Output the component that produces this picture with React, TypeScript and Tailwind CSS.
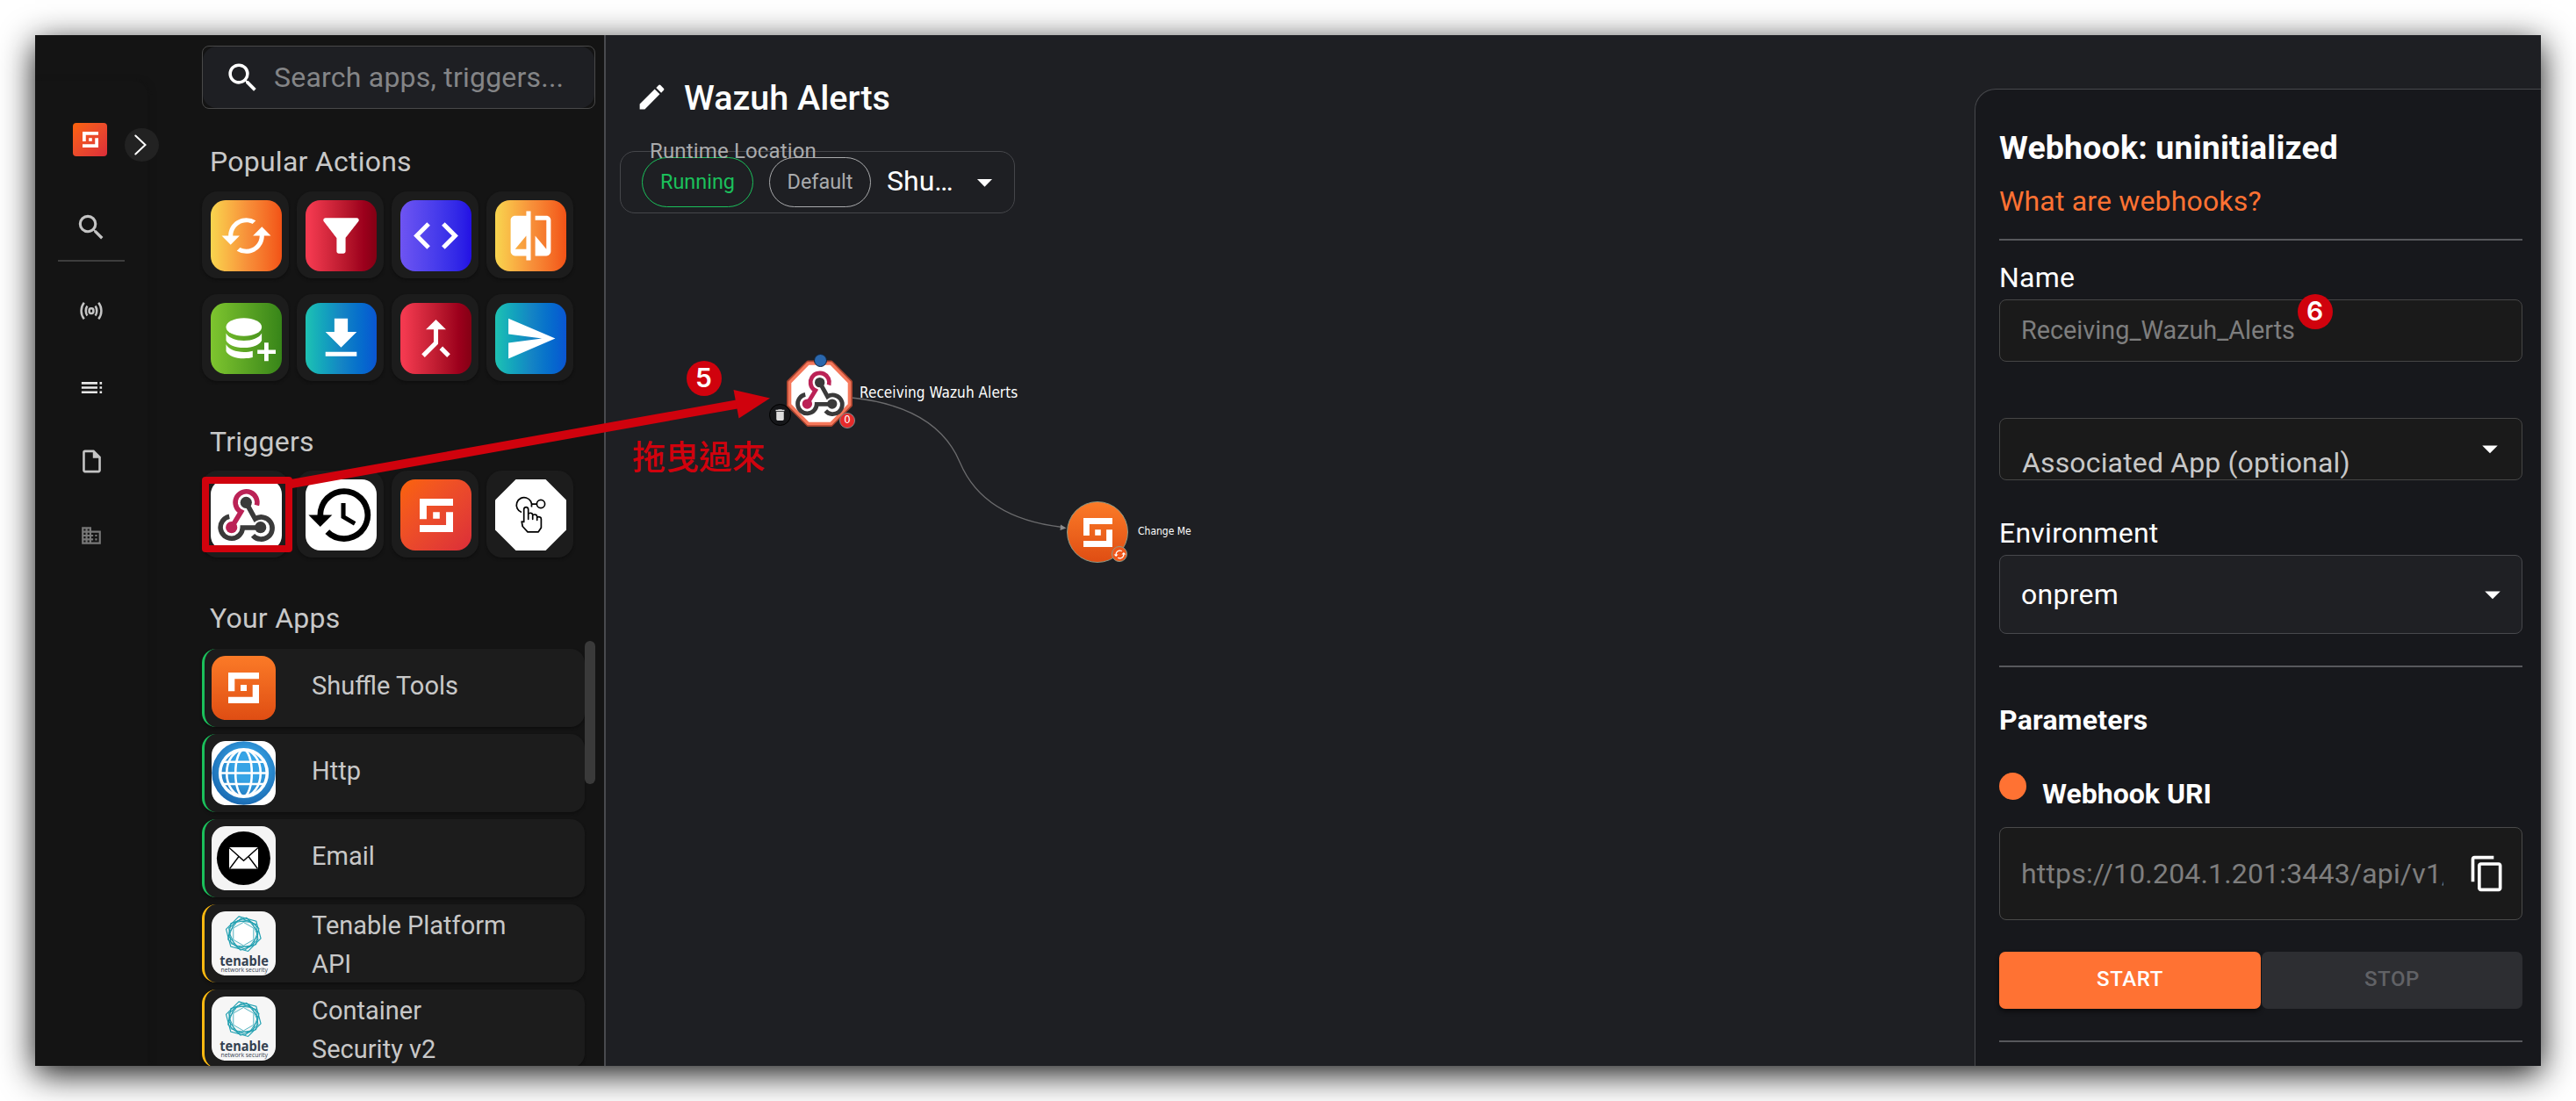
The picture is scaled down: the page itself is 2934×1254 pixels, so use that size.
import type { ReactNode } from "react";
import {
  MdArrowDropDown,
  MdBusiness,
  MdCached,
  MdCallMerge,
  MdCode,
  MdCompare,
  MdContentCopy,
  MdDelete,
  MdEdit,
  MdFilterAlt,
  MdGetApp,
  MdHistory,
  MdOutlineInsertDriveFile,
  MdSearch,
  MdSend,
  MdToc,
} from "react-icons/md";

function ShuffleMark({ className }: { className: string }) {
  return (
    <svg viewBox="0 0 115 115" className={className} fill="#fff">
      <path d="M0 0h115v24H24v46H0z" />
      <path d="M46 46h23v23H46z" />
      <path d="M115 115H0V91h91V46h24z" />
    </svg>
  );
}

function WebhookMark({ className }: { className: string }) {
  return (
    <svg viewBox="0 0 81 81" className={className} fill="none" strokeWidth="5.6">
      <path d="M21.2 42.3A12.6 12.6 0 1 0 36.3 55H56.7" stroke="#3a3a3a" />
      <path d="M40.3 26.3L50.6 45A12.6 12.6 0 1 1 48 63.8" stroke="#3a3a3a" />
      <path d="M52.4 29.6A12.4 12.4 0 1 0 32.4 35.6L34.6 36.8L23.7 54.7" stroke="#bb2256" />
      <circle cx="40.3" cy="26.3" r="6.6" fill="#3a3a3a" />
      <circle cx="56.7" cy="54.7" r="6.6" fill="#3a3a3a" />
      <circle cx="23.7" cy="54.7" r="6.6" fill="#bb2256" />
    </svg>
  );
}

function BroadcastIcon() {
  return (
    <svg viewBox="0 0 26 20" className="h-5 w-[26px]" fill="none" stroke="#c4c4c4" strokeWidth="2.5">
      <rect x="10.6" y="7.2" width="4.8" height="5.8" rx="2.2" />
      <path d="M8.4 4.4C6.200 7.4 6.200 12.600 8.400 15.600M17.600 4.400c2.200 3 2.200 8.200 0 11.200" />
      <path d="M4.800 .8C.500 6 .500 14.200 4.800 19.300M21.200 .8c4.300 5.200 4.300 13.400 0 18.500" />
    </svg>
  );
}

function DatabasePlusIcon() {
  return (
    <svg viewBox="0 0 81 81" className="size-[81px]" fill="#fff">
      <ellipse cx="37.800" cy="27.500" rx="20.300" ry="10.200" />
      <path d="M17.500 34.500c3 5.500 11 8.500 20.300 8.500s17.300-3 20.300-8.500v8.200c-2 4.800-10 8.300-20.300 8.300s-18.300-3.500-20.300-8.300z" />
      <path d="M17.500 47.300c3 5.500 11 8.700 20.300 8.700 3.600 0 7-.4 10-1.200v7.300c-3 .8-6.400 1.200-10 1.200-10.300 0-18.300-3.500-20.300-8.300z" />
      <path d="M61 45.300h4.800v8.200H74v4.600h-8.200v8.200H61v-8.200h-7.800v-4.600H61z" />
    </svg>
  );
}

function ManualTriggerIcon() {
  return (
    <svg viewBox="0 0 81 81" className="size-[81px]" fill="none">
      <path d="M23.500 0h34L81 23.500v34L57.500 81h-34L0 57.500v-34z" fill="#fff" />
      <g stroke="#000" strokeWidth="1.700" strokeLinejoin="round">
        <path d="M30 37.500A8.700 8.700 0 1 1 41.400 31.500" />
        <path d="M41.600 28.200h5.800" />
        <circle cx="52" cy="28" r="4.600" />
        <path d="M32.700 48.500V34.300c0-3.600 5-3.600 5 0v11V39.500c1.500-2 5-1.500 5 1v4.800V41c1.500-1.800 5-1 5 1.300v4V43.500c1.800-1.600 4.700-.6 4.700 1.500v10l-3.200 4.800H37l-5.800-6.300-1-5.500z" />
      </g>
    </svg>
  );
}

function GlobeIcon() {
  return (
    <svg viewBox="0 0 73 73" className="size-[73px]" fill="none">
      <defs>
        <radialGradient id="globe" cx="0.55" cy="0.4" r="0.6">
          <stop offset="0.35" stopColor="#36a4e6" />
          <stop offset="1" stopColor="#1b6bb3" />
        </radialGradient>
      </defs>
      <path d="M0 0h73v73H0z" fill="#fff" />
      <circle cx="36.500" cy="36.500" r="36.200" fill="url(#globe)" />
      <g stroke="#fff" strokeWidth="2.600">
        <circle cx="36.500" cy="36.500" r="26.800" strokeWidth="3.600" />
        <ellipse cx="36.500" cy="36.500" rx="9.300" ry="26.500" />
        <ellipse cx="36.500" cy="36.500" rx="19.300" ry="26.500" />
        <path d="M10 36.500h53M13.500 23.800h46M13.500 49h46" />
      </g>
    </svg>
  );
}

function EnvelopeIcon() {
  return (
    <svg viewBox="0 0 73 73" className="size-[73px]">
      <path d="M0 0h73v73H0z" fill="#f4f4f4" />
      <circle cx="36.400" cy="36.500" r="30.500" fill="#000" />
      <path d="M20 24h33v24.500H20z" fill="#fff" />
      <path d="M20 24.500l16.500 14.800L53 24.500M20.500 48.500l10.500-14M52.500 48.500l-10.500-14" fill="none" stroke="#000" strokeWidth="1.400" />
    </svg>
  );
}

function TenableIcon() {
  return (
    <svg viewBox="0 0 73 73" className="size-[73px]">
      <path d="M0 0h73v73H0z" fill="#f6f6f6" />
      <g transform="translate(36.300 25.700)" fill="none" stroke="#1f9fb0" strokeWidth="1.100">
        <path transform="rotate(-15) scale(1.050)" d="M0-19.500l16.900 9.800v19.400L0 19.500l-16.900-9.800V-9.700z" />
        <path transform="rotate(-8) scale(.92)" d="M0-19.500l16.900 9.800v19.400L0 19.500l-16.900-9.800V-9.700z" />
        <path transform="rotate(10) scale(.96)" d="M0-19.500l16.900 9.800v19.400L0 19.500l-16.900-9.800V-9.700z" />
        <path transform="rotate(20) scale(.86)" d="M0-19.500l16.900 9.800v19.400L0 19.500l-16.900-9.800V-9.700z" />
        <path transform="rotate(-24) scale(.84)" d="M0-19.500l16.900 9.800v19.400L0 19.500l-16.900-9.800V-9.700z" />
        <path transform="scale(.68)" d="M0-19.500l16.900 9.800v19.400L0 19.500l-16.900-9.800V-9.700z" fill="#fff" />
      </g>
      <text x="9.300" y="61.500" textLength="55.500" lengthAdjust="spacingAndGlyphs" className="font-['Open_Sans'] text-[16px] font-bold" fill="#344150">
        tenable
      </text>
      <text x="10.500" y="69" textLength="53.500" lengthAdjust="spacingAndGlyphs" className="font-['Open_Sans'] text-[7px]" fill="#344150">
        network security
      </text>
    </svg>
  );
}

function Tile({ fill, children }: { fill: string; children: ReactNode }) {
  return (
    <div className="h-[99px] w-[99px] rounded-[18px] bg-[#1c1c1c] pt-2.5 pl-2.5 shadow-[0_2px_3px_#0f0f0f]">
      <div className={`flex size-[81px] items-center justify-center overflow-hidden rounded-[17px] text-white ${fill}`}>
        {children}
      </div>
    </div>
  );
}

const amber = "bg-linear-to-r from-[#f8d54f] via-[#f7913a] to-[#f25216]";
const crimson = "bg-linear-to-r from-[#f3394f] from-5% via-[#9c001c] via-82% to-[#840014]";
const violet = "bg-linear-to-r from-[#6e54f2] to-[#230fe4]";
const green = "bg-linear-to-r from-[#7ec52f] to-[#378519]";
const ocean = "bg-linear-to-r from-[#1fc2b2] via-[#1585c4] to-[#0b55d2]";
const flame = "bg-linear-to-br from-[#fb6306] to-[#db2d38]";

const actions = [
  { name: "repeat", fill: amber, icon: <MdCached className="size-[61px]" /> },
  { name: "filter", fill: crimson, icon: <MdFilterAlt className="size-[61px]" /> },
  { name: "code", fill: violet, icon: <MdCode className="size-[61px]" /> },
  { name: "compare", fill: amber, icon: <MdCompare className="size-[61px]" /> },
  { name: "store", fill: green, icon: <DatabasePlusIcon /> },
  { name: "download", fill: ocean, icon: <MdGetApp className="size-[61px]" /> },
  { name: "merge", fill: crimson, icon: <MdCallMerge className="size-[61px]" /> },
  { name: "send", fill: ocean, icon: <MdSend className="size-[61px]" /> },
];

const triggers = [
  { name: "webhook", fill: "bg-white", icon: <WebhookMark className="size-[81px]" /> },
  { name: "schedule", fill: "bg-white", icon: <MdHistory className="size-[81px] text-black" /> },
  { name: "subflow", fill: flame, icon: <ShuffleMark className="size-[38px]" /> },
  { name: "manual", fill: "bg-transparent", icon: <ManualTriggerIcon /> },
];

const apps = [
  {
    name: "Shuffle Tools",
    edge: "border-[#1bc05b]",
    pad: "pt-5",
    icon: (
      <div className="flex size-full items-center justify-center bg-linear-to-b from-[#fb7a27] to-[#df4d13]">
        <ShuffleMark className="size-[35px]" />
      </div>
    ),
  },
  { name: "Http", edge: "border-[#1bc05b]", pad: "pt-5", icon: <GlobeIcon /> },
  { name: "Email", edge: "border-[#1bc05b]", pad: "pt-5", icon: <EnvelopeIcon /> },
  { name: "Tenable Platform API", edge: "border-[#fbb911]", pad: "pt-0.5", icon: <TenableIcon /> },
  { name: "Container Security v2", edge: "border-[#fbb911]", pad: "pt-0.5", icon: <TenableIcon /> },
];

function NavRail() {
  return (
    <nav className="w-[150px] shrink-0 pt-[52px]">
      <div className="relative flex h-full w-32 flex-col items-center rounded-tr-[16px] pt-12 text-[#c4c4c4] shadow-[3px_0_6px_#131313]">
        <div className="mr-[3px] flex h-[38px] w-[39px] shrink-0 items-center justify-center rounded-[4px] bg-linear-to-br from-[#fb6306] to-[#db2d38]">
          <ShuffleMark className="size-[18px]" />
        </div>
        <div className="absolute top-[54px] left-[102px] flex h-[38px] w-[39px] items-center justify-center rounded-full bg-[#222]">
          <svg viewBox="0 0 39 38" className="h-[38px] w-[39px]" fill="none" stroke="#fff" strokeWidth="2">
            <path d="M12.300 8.500L23.500 19L12.300 29.500" strokeLinecap="round" />
          </svg>
        </div>
        <div className="mt-[61px] flex size-10 shrink-0 items-center justify-center">
          <MdSearch className="size-[38px]" />
        </div>
        <div className="mt-[17px] h-0.5 w-[76px] shrink-0 bg-[#3d3d3d]" />
        <div className="mt-9 flex size-10 shrink-0 items-center justify-center">
          <BroadcastIcon />
        </div>
        <div className="mt-[47px] flex size-10 shrink-0 items-center justify-center">
          <MdToc className="size-[31px] text-[#e8e8e8]" />
        </div>
        <div className="mt-11 flex size-10 shrink-0 items-center justify-center">
          <MdOutlineInsertDriveFile className="size-[31px]" />
        </div>
        <div className="mt-[45px] flex size-10 shrink-0 items-center justify-center">
          <MdBusiness className="size-[26px] text-[#777]" />
        </div>
      </div>
    </nav>
  );
}

function Sidebar() {
  const heading = "pl-[9px] text-[32px] leading-[48px] tracking-[0.25px] text-[#c8c8c8]";
  return (
    <aside className="w-[500px] shrink-0 overflow-hidden border-r-2 border-[#494a4e] pt-3 pl-10">
      <div className="h-[72px] w-[448px] rounded-[8px] border border-[#494949]">
        <div className="flex h-full items-center gap-[14px] rounded-[16px] bg-[#1e1f23] pl-6">
          <MdSearch className="size-[43px] text-white" />
          <span className="text-[32px] tracking-[0.22px] whitespace-nowrap text-[#848587]">Search apps, triggers...</span>
        </div>
      </div>
      <h2 className={`mt-9 ${heading}`}>Popular Actions</h2>
      <div className="mt-2.5 grid w-[423px] grid-cols-4 gap-x-[9px] gap-y-[18px]">
        {actions.map((a) => (
          <Tile key={a.name} fill={a.fill}>
            {a.icon}
          </Tile>
        ))}
      </div>
      <h2 className={`mt-[45px] ${heading}`}>Triggers</h2>
      <div className="mt-[9px] grid w-[423px] grid-cols-4 gap-x-[9px]">
        {triggers.map((t) => (
          <Tile key={t.name} fill={t.fill}>
            {t.icon}
          </Tile>
        ))}
      </div>
      <h2 className={`mt-[45px] ${heading}`}>Your Apps</h2>
      <div className="mt-0.5 flex">
        <ul className="flex w-[436px] flex-col gap-2 pt-[9px]">
          {apps.map((app) => (
            <li key={app.name} className={`flex h-[89px] rounded-[16px] border-l-3 bg-[#1c1c1c] pl-2 shadow-[0_2px_3px_#0f0f0f] ${app.edge}`}>
              <div className="mt-2 size-[73px] shrink-0 overflow-hidden rounded-[16px]">{app.icon}</div>
              <p className={`ml-[41px] w-[228px] text-[29px] leading-[44px] text-[#c8c8c8] ${app.pad}`}>{app.name}</p>
            </li>
          ))}
        </ul>
        <div className="h-[163px] w-3 rounded-full bg-[#3a3a3a]" />
      </div>
    </aside>
  );
}

function Canvas() {
  return (
    <main className="relative min-w-0 flex-1 pt-12">
      <div className="flex h-12 items-center gap-[18px] pl-[34px] text-white">
        <MdEdit className="mb-[3px] size-[37px]" />
        <h1 className="text-[39.500px] font-medium">Wazuh Alerts</h1>
      </div>
      <div className="relative mt-9 ml-4 flex h-[71px] w-[450px] items-center rounded-[17px] border border-[#45464a] pr-[13px] pl-6">
        <span className="absolute -top-[17px] left-[33px] text-[24px] leading-8 tracking-[0.15px] text-[#aaabad]">Runtime Location</span>
        <span className="flex h-[57px] w-[127px] items-center justify-center rounded-full border border-[#1bc05b] text-[23.400px] text-[#1bc05b]">
          Running
        </span>
        <span className="ml-[18px] flex h-[57px] w-[116px] items-center justify-center rounded-full border border-[#a9aaac] text-[23.400px] text-[#aaabad]">
          Default
        </span>
        <span className="ml-[18px] pb-1 text-[32px] text-white">Shu…</span>
        <MdArrowDropDown className="ml-auto size-[41px] text-white" />
      </div>

      <svg viewBox="690 40 1559 1174" className="absolute top-0 left-0 h-[1174px] w-[1559px]" fill="none">
        <path d="M970 453Q1067 463 1093.500 527Q1120 590 1210 600.500" stroke="#6b6b6d" strokeWidth="1.300" />
        <path d="M1208 597.500l6.500 4-7 2.600z" fill="#8a8a8c" />
        <g strokeLinejoin="round">
          <path d="M920.500 413h26L968.500 435v26.500L946.500 483.500h-26L898.500 461.500V435z" stroke="#a8432f" strokeWidth="5" />
          <path d="M920.500 414h26L967.500 435.500v25.500L946.500 482.500h-26L899.500 461V435.500z" stroke="#f5785b" strokeWidth="3.600" fill="#fff" />
        </g>
      </svg>

      <WebhookMark className="absolute top-[373.300px] left-[208.900px] size-[69.700px]" />
      <div className="absolute top-[363px] left-[236.500px] size-[15px] rounded-full border border-[#12233a] bg-[#2a67ad]" />
      <div className="absolute top-[419.500px] left-[186px] flex size-[25px] items-center justify-center rounded-full border border-black bg-[#151619]">
        <MdDelete className="size-[17px] text-[#dcdcdc]" />
      </div>
      <div className="absolute top-[430px] left-[266px] flex size-[18px] items-center justify-center rounded-full border border-[#7d8a8c] bg-[#e52a2a] pb-0.5 font-['DejaVu_Sans_Condensed'] text-[13px] text-white">
        0
      </div>
      <span className="absolute top-[396px] left-[289px] font-['DejaVu_Sans_Condensed'] text-[17px] leading-[22px] tracking-[0.06px] whitespace-nowrap text-white">
        Receiving Wazuh Alerts
      </span>

      <div className="absolute top-[531px] left-[525px] flex size-[70px] items-center justify-center rounded-full border border-[#8d9a86] bg-linear-to-b from-[#fb7a27] to-[#df4d13]">
        <ShuffleMark className="size-[33px]" />
      </div>
      <div className="absolute top-[582px] left-[576px] flex size-[18px] items-center justify-center rounded-full border border-[#8d9a86] bg-[#f2571a]">
        <MdCached className="size-[15px] text-white" />
      </div>
      <span className="absolute top-[557px] left-[606px] font-['DejaVu_Sans_Condensed'] text-[12px] leading-4 whitespace-nowrap text-white">Change Me</span>
    </main>
  );
}

function DetailsPanel() {
  const label = "text-[32px] leading-[48px] tracking-[0.25px]";
  return (
    <aside className="mt-[61px] w-[645px] shrink-0 overflow-hidden rounded-tl-[24px] border-t border-l border-[#47484c] bg-[#17181c] pt-[42px] pr-[21px] pl-[27px] text-white">
      <h2 className="text-[37.500px] leading-[48px] font-bold tracking-[0.17px]">Webhook: uninitialized</h2>
      <p className="mt-[13px] text-[32px] leading-[48px] tracking-[0.17px] text-[#ff7233]">What are webhooks?</p>
      <div className="mt-[19px] h-0.5 bg-[#57585c]" />
      <p className={`mt-[18px] ${label}`}>Name</p>
      <div className="mt-px flex h-[71px] items-center rounded-[8px] border border-[#464646] bg-[#1a1a1a] pl-6 text-[28.800px] text-[#7e7e7e]">
        Receiving_Wazuh_Alerts
      </div>
      <div className="mt-16 flex h-[71px] items-start justify-between rounded-[8px] border border-[#464646] bg-[#1a1a1a] pr-[15px] pl-[25px]">
        <span className="mt-[26px] text-[32px] leading-[48px] tracking-[0.15px] text-[#c8c8c8]">Associated App (optional)</span>
        <MdArrowDropDown className="mt-[13px] size-[42px]" />
      </div>
      <p className={`mt-9 ${label}`}>Environment</p>
      <div className="mt-px flex h-[90px] items-center justify-between rounded-[8px] border border-[#47484c] bg-[#1f2024] pr-[12.500px] pl-6">
        <span className={label}>onprem</span>
        <MdArrowDropDown className="size-[42px]" />
      </div>
      <div className="mt-9 h-0.5 bg-[#57585c]" />
      <h3 className="mt-9 text-[32px] leading-[48px] font-bold tracking-[0.22px]">Parameters</h3>
      <div className="mt-9 flex items-start gap-[18px]">
        <div className="size-[31px] rounded-full bg-[#ff7233]" />
        <h3 className="text-[32px] leading-[48px] font-bold">Webhook URI</h3>
      </div>
      <div className="mt-[14px] flex h-[106px] items-center justify-between rounded-[8px] border border-[#4a4a4a] bg-[#1a1a1a] pr-[17px] pl-6">
        <span className="w-[481px] overflow-hidden text-[32px] leading-[48px] tracking-[0.170px] whitespace-nowrap text-[#7e7e7e]">
          https://10.204.1.201:3443/api/v1/
        </span>
        <MdContentCopy className="size-[44px]" />
      </div>
      <div className="mt-9 flex gap-px text-[24px] font-medium tracking-[0.600px]">
        <button className="h-[65px] w-[298px] rounded-[7px] bg-[#ff7233] pb-[3px] text-white shadow-[0_3px_5px_#0c0c0e]">START</button>
        <button className="h-[65px] w-[297px] rounded-[7px] bg-[#2d2e32] pb-[3px] text-[#616266]">STOP</button>
      </div>
      <div className="mt-9 h-0.5 bg-[#57585c]" />
    </aside>
  );
}

function StepBadge({ step, place }: { step: string; place: string }) {
  return (
    <div className={`absolute flex size-10 items-center justify-center rounded-full bg-[#d0020d] pb-px font-['Inter'] text-[30px] font-semibold text-white ${place}`}>
      {step}
    </div>
  );
}

export default function App() {
  return (
    <div className="relative h-[1254px] w-[2934px] overflow-hidden bg-white p-10 font-['Roboto',sans-serif]">
      <div className="flex h-[1174px] w-[2854px] shadow-[0_9px_36px_rgba(0,0,0,0.93)]">
        <div className="flex h-full w-full overflow-hidden bg-[#1e1f23]">
          <div className="flex bg-[#141414]">
            <NavRail />
            <Sidebar />
          </div>
          <Canvas />
          <DetailsPanel />
        </div>
      </div>

      <svg viewBox="0 0 2934 1254" className="absolute inset-0 h-[1254px] w-[2934px]" fill="none">
        <path d="M332 551L842 460" stroke="#d0020d" strokeWidth="10" />
        <path d="M877 453.500L835.500 444L841.500 476.500z" fill="#d0020d" />
        <rect x="234" y="547" width="95" height="78" stroke="#d0020d" strokeWidth="8" strokeLinejoin="round" />
      </svg>
      <StepBadge step="5" place="top-[411px] left-[781.500px]" />
      <StepBadge step="6" place="top-[335px] left-[2616.500px]" />
      <span className="absolute top-[492px] left-[720px] font-['Noto_Sans_CJK_TC',sans-serif] text-[37.900px] leading-[52px] font-medium whitespace-nowrap text-[#d0020d]">
        拖曳過來
      </span>
    </div>
  );
}
